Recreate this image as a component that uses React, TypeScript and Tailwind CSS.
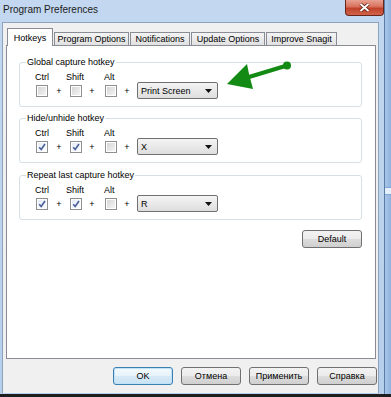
import React from "react";

const btnBg =
  "bg-[linear-gradient(#f2f2f2_0%,#ebebeb_50%,#dddddd_50%,#cfcfcf_100%)]";

const Check = ({ on }: { on?: boolean }) => (
  <span className="w-[12px] h-[12px] border border-[#8e8f8f] bg-white p-[1px] flex shrink-0">
    <span
      className={`flex-1 flex items-center justify-center ${
        on
          ? "bg-gradient-to-br from-[#e6ecf7] to-[#fafbff]"
          : "bg-gradient-to-br from-[#d6d6d6] to-[#f4f4f4]"
      }`}
    >
      {on && (
        <svg width="8" height="8" viewBox="0 0 8 8">
          <path
            d="M1.2 4.2 L3.2 6.5 L7 1"
            fill="none"
            stroke="#4a5f97"
            strokeWidth="1.6"
          />
        </svg>
      )}
    </span>
  </span>
);

const Plus = ({ ml }: { ml: string }) => (
  <span className={`${ml} w-[6px] text-center leading-[10px]`}>+</span>
);

const Group = ({
  title,
  checks,
  value,
  top,
}: {
  title: string;
  checks: boolean[];
  value: string;
  top: string;
}) => (
  <div
    className={`${top} h-[45px] border border-[#d5dfe5] rounded-[3px] flex flex-col`}
  >
    <span className="-mt-[6px] ml-[6px] px-[1px] bg-white w-fit leading-[11px]">
      {title}
    </span>
    <div className="mt-[4px] ml-[15px] flex leading-[10px]">
      <span className="w-[31px]">Ctrl</span>
      <span className="w-[38px]">Shift</span>
      <span>Alt</span>
    </div>
    <div className="ml-[16px] h-[17px] flex items-center">
      <Check on={checks[0]} />
      <Plus ml="ml-[8px]" />
      <span className="ml-[8px] flex">
        <Check on={checks[1]} />
      </span>
      <Plus ml="ml-[7px]" />
      <span className="ml-[10px] flex">
        <Check on={checks[2]} />
      </span>
      <Plus ml="ml-[7px]" />
      <div className="ml-[7px] w-[81px] h-[17px] border border-[#707070] rounded-[2px] bg-gradient-to-b from-[#f4f4f4] to-[#dedede] flex items-center justify-between pl-[3px] pr-[5px]">
        <span className="leading-[10px]">{value}</span>
        <svg width="7" height="4" viewBox="0 0 7 4">
          <path d="M0 0h7L3.5 4z" fill="#111" />
        </svg>
      </div>
    </div>
  </div>
);

const tabs = [
  { label: "Program Options", w: "w-[75px]" },
  { label: "Notifications", w: "w-[60px]" },
  { label: "Update Options", w: "w-[74px]" },
  { label: "Improve Snagit", w: "w-[71px]" },
];

const App = () => {
  return (
    <div className="relative w-[391px] h-[397px] bg-[#222] flex flex-col overflow-hidden text-[9px] text-black font-['Liberation_Sans',Arial,sans-serif]">
      <div className="flex h-[394px]">
        {/* window */}
        <div className="w-[385px] h-[394px] bg-gradient-to-b from-[#c3d8f0] to-[#b6cfea] border-r border-[#5a7ba3] flex flex-col">
          <div className="h-[22px] flex justify-between">
            <span className="ml-[3px] mt-[4px] text-[10px] leading-[12px] text-[#1b1b1b]">
              Program Preferences
            </span>
            <div className="w-[39px] h-[16px] border border-t-0 border-[#6b2518] rounded-b-[4px] bg-[linear-gradient(#e9a192_0%,#d8705c_45%,#c1412a_55%,#d0634b_100%)] flex items-center justify-center">
              <svg width="11" height="9" viewBox="0 0 11 9">
                <path
                  d="M1.5 1 L9.5 8 M9.5 1 L1.5 8"
                  stroke="#5a1a10"
                  strokeWidth="3.4"
                />
                <path
                  d="M1.5 1 L9.5 8 M9.5 1 L1.5 8"
                  stroke="#fff"
                  strokeWidth="1.9"
                />
              </svg>
            </div>
          </div>

          {/* client */}
          <div className="ml-[2px] w-[377px] h-[371px] bg-[#f0f0f0] border-l border-t border-r border-[#8da2bd] flex flex-col">
            {/* tabs */}
            <div className="mt-[5px] ml-[4px] h-[17px] flex items-end">
              <div className="relative z-10 -mb-[1px] w-[46px] h-[18px] bg-white border border-b-0 border-[#898c95] flex items-center justify-center leading-[10px]">
                Hotkeys
              </div>
              {tabs.map((t, i) => (
                <div
                  key={i}
                  className={`${t.w} h-[13px] ml-[1px] border border-b-0 border-[#898c95] bg-gradient-to-b from-[#f4f4f4] to-[#e1e1e1] flex items-center justify-center leading-[10px]`}
                >
                  {t.label}
                </div>
              ))}
            </div>

            {/* panel */}
            <div className="ml-[3px] w-[370px] h-[314px] bg-white border border-[#898c95] pl-[12px] pr-[13px] flex flex-col">
              <Group
                top="mt-[16px]"
                title="Global capture hotkey"
                checks={[false, false, false]}
                value="Print Screen"
              />
              <Group
                top="mt-[11px]"
                title="Hide/unhide hotkey"
                checks={[true, true, false]}
                value="X"
              />
              <Group
                top="mt-[12px]"
                title="Repeat last capture hotkey"
                checks={[true, true, false]}
                value="R"
              />
              <div className="mt-[10px] flex justify-end">
                <button
                  className={`w-[60px] h-[18px] border border-[#707070] rounded-[3px] ${btnBg} leading-[10px]`}
                >
                  Default
                </button>
              </div>
            </div>

            {/* footer buttons */}
            <div className="mt-[8px] pr-[1px] flex justify-end gap-[8px]">
              <button className="w-[60px] h-[18px] border border-[#3c7fb1] rounded-[3px] bg-[linear-gradient(#f4fafd_0%,#e6f2fa_50%,#d7e9f6_50%,#c9e2f3_100%)] shadow-[inset_0_0_0_1px_#bfe2f8] leading-[10px]">
                OK
              </button>
              {["Отмена", "Применить", "Справка"].map((b) => (
                <button
                  key={b}
                  className={`w-[60px] h-[18px] border border-[#707070] rounded-[3px] ${btnBg} leading-[10px]`}
                >
                  {b}
                </button>
              ))}
            </div>
          </div>
        </div>

        {/* window behind, right edge */}
        <div className="flex-1 bg-gradient-to-r from-[#a9c6e8] to-[#8fb3df] flex flex-col">
          <div className="mt-[187px] h-[8px] bg-[#e4f0fb] border-y border-[#7fa6d6]" />
        </div>
      </div>
      <div className="flex-1 bg-[#1e1e1e]" />

      {/* annotation arrow */}
      <svg
        className="absolute left-[222px] top-[58px] pointer-events-none"
        width="72"
        height="36"
        viewBox="222 58 72 36"
      >
        <path d="M249 77 L287 65.5" stroke="#138a13" strokeWidth="4" />
        <circle cx="287" cy="65.5" r="4" fill="#138a13" />
        <polygon points="227,84 247,64 249,74 253,89" fill="#138a13" />
      </svg>
    </div>
  );
};

export default App;
